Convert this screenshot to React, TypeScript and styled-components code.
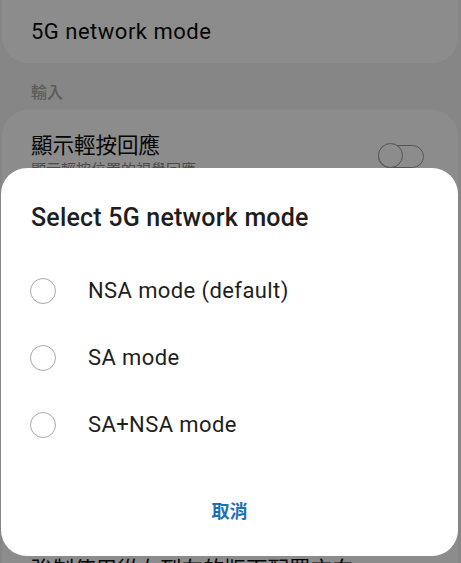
import styled, { createGlobalStyle } from 'styled-components';

const GlobalStyle = createGlobalStyle`
  html, body {
    margin: 0;
    padding: 0;
    background: #f4f4f4;
    font-family: Roboto, "Noto Sans CJK TC", sans-serif;
  }
`;

const settingRows = [
  { title: '顯示輕按回應', sub: '顯示輕按位置的視覺回應' },
  { title: '顯示指標位置', sub: '顯示目前觸控資料的螢幕覆疊' },
  { title: '顯示表面更新', sub: '更新時顯示整個視窗表面' },
  { title: '顯示版面配置界限', sub: '顯示剪輯範圍、邊界等' },
  { title: '強制使用從右到左的版面配置方向', sub: '強制將所有語言代碼的螢幕版面配置方向改為從右到左' },
];

const modes = ['NSA mode (default)', 'SA mode', 'SA+NSA mode'];

const App = () => {
  return (
    <Screen>
      <GlobalStyle />
      <Card>
        <CardTitle>5G network mode</CardTitle>
      </Card>
      <SectionLabel>輸入</SectionLabel>
      <ListCard>
        {settingRows.map(row => (
          <SettingRow key={row.title}>
            <SettingText>
              <SettingTitle>{row.title}</SettingTitle>
              <SettingSub>{row.sub}</SettingSub>
            </SettingText>
            <Toggle>
              <Thumb />
            </Toggle>
          </SettingRow>
        ))}
      </ListCard>

      <Scrim />
      <Dialog>
        <DialogTitle>Select 5G network mode</DialogTitle>
        <OptionList>
          {modes.map(mode => (
            <Option key={mode}>
              <Radio />
              <OptionLabel>{mode}</OptionLabel>
            </Option>
          ))}
        </OptionList>
        <CancelButton type="button">取消</CancelButton>
      </Dialog>
    </Screen>
  );
};

const Screen = styled.div`
  position: relative;
  height: 563px;
  overflow: hidden;
  background: #f4f4f4;
`;

const Card = styled.div`
  margin: -30px 3px 0 2px;
  padding: 49px 29px 18px;
  background: #ffffff;
  border-radius: 26px;
`;

const CardTitle = styled.div`
  font-size: 22px;
  line-height: 26px;
  letter-spacing: 0.5px;
  color: #0a0a0a;
`;

const SectionLabel = styled.div`
  padding: 20px 31px 7px;
  font-size: 16px;
  line-height: 20px;
  color: #a6a6a6;
  font-weight: 500;
`;

const ListCard = styled.div`
  margin: 0 3px 0 2px;
  background: #ffffff;
  border-radius: 26px;
`;

const SettingRow = styled.div`
  display: flex;
  align-items: center;
  height: 48px;
  padding: 22px 34px 36px 29px;
`;

const SettingText = styled.div`
  flex: 1;
  min-width: 0;
`;

const SettingTitle = styled.div`
  font-size: 21.5px;
  line-height: 28px;
  color: #0a0a0a;
  white-space: nowrap;
  overflow: hidden;
`;

const SettingSub = styled.div`
  font-size: 15px;
  line-height: 20px;
  color: #8a8a8a;
  white-space: nowrap;
  overflow: hidden;
`;

const Toggle = styled.div`
  position: relative;
  width: 44px;
  height: 21px;
  border: 1.5px solid #9c9c9c;
  border-radius: 12px;
  flex-shrink: 0;
`;

const Thumb = styled.div`
  position: absolute;
  left: -1.5px;
  top: -2.5px;
  width: 23px;
  height: 23px;
  border: 1.5px solid #9c9c9c;
  border-radius: 50%;
  background: #ffffff;
`;

const Scrim = styled.div`
  position: absolute;
  inset: 0;
  background: rgba(0, 0, 0, 0.45);
`;

const Dialog = styled.div`
  position: absolute;
  left: 1px;
  top: 168px;
  width: 457px;
  height: 388px;
  background: #ffffff;
  border-radius: 26px;
  display: flex;
  flex-direction: column;
`;

const DialogTitle = styled.div`
  padding: 33px 30px 0;
  margin-bottom: 22px;
  font-size: 25px;
  line-height: 34px;
  letter-spacing: 0.2px;
  font-weight: 500;
  color: #1e1e1e;
`;

const OptionList = styled.div`
  display: flex;
  flex-direction: column;
`;

const Option = styled.div`
  display: flex;
  align-items: center;
  gap: 32px;
  height: 67px;
  padding-left: 29px;
`;

const Radio = styled.span`
  box-sizing: border-box;
  width: 26px;
  height: 26px;
  border: 1.5px solid #a8a8a8;
  border-radius: 50%;
  flex-shrink: 0;
`;

const OptionLabel = styled.span`
  font-size: 22px;
  letter-spacing: 0.4px;
  color: #1e1e1e;
`;

const CancelButton = styled.button`
  align-self: center;
  margin-top: 26px;
  height: 52px;
  padding: 0 24px;
  border: none;
  background: none;
  font-family: Roboto, "Noto Sans CJK TC", sans-serif;
  font-size: 18px;
  font-weight: 700;
  color: #1c6fbd;
`;

export default App;
